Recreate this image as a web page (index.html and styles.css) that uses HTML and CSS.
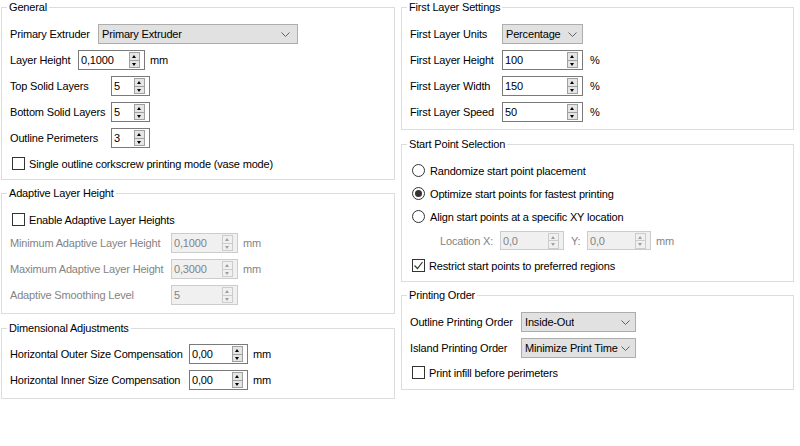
FILE: index.html
```html
<!DOCTYPE html>
<html>
<head>
  <title>Layer Settings</title>
  <link rel="stylesheet" href="styles.css">
</head>
<body>

<div class="page">
  <div class="column">

    <fieldset class="group general">
      <legend>General</legend>
      <div class="row">
        <span class="label w-extruder">Primary Extruder</span>
        <div class="combo combo-extruder"><span>Primary Extruder</span><svg class="chevron" width="9" height="5"><path d="M0.5 0.5 L4.5 4.5 L8.5 0.5" /></svg></div>
      </div>
      <div class="row">
        <span class="label w-layer">Layer Height</span>
        <div class="spin spin-md"><span class="spin-val">0,1000</span><span class="spin-btns"><b class="up"></b><b class="down"></b></span></div>
        <span class="unit">mm</span>
      </div>
      <div class="row">
        <span class="label w-solid">Top Solid Layers</span>
        <div class="spin spin-sm"><span class="spin-val">5</span><span class="spin-btns"><b class="up"></b><b class="down"></b></span></div>
      </div>
      <div class="row">
        <span class="label w-solid">Bottom Solid Layers</span>
        <div class="spin spin-sm"><span class="spin-val">5</span><span class="spin-btns"><b class="up"></b><b class="down"></b></span></div>
      </div>
      <div class="row">
        <span class="label w-solid">Outline Perimeters</span>
        <div class="spin spin-sm"><span class="spin-val">3</span><span class="spin-btns"><b class="up"></b><b class="down"></b></span></div>
      </div>
      <div class="row row-check">
        <span class="check"></span>
        <span>Single outline corkscrew printing mode (vase mode)</span>
      </div>
    </fieldset>

    <fieldset class="group adaptive">
      <legend>Adaptive Layer Height</legend>
      <div class="row row-check-sm">
        <span class="check"></span>
        <span>Enable Adaptive Layer Heights</span>
      </div>
      <div class="row disabled">
        <span class="label w-adaptive">Minimum Adaptive Layer Height</span>
        <div class="spin spin-md"><span class="spin-val">0,1000</span><span class="spin-btns"><b class="up"></b><b class="down"></b></span></div>
        <span class="unit">mm</span>
      </div>
      <div class="row disabled">
        <span class="label w-adaptive">Maximum Adaptive Layer Height</span>
        <div class="spin spin-md"><span class="spin-val">0,3000</span><span class="spin-btns"><b class="up"></b><b class="down"></b></span></div>
        <span class="unit">mm</span>
      </div>
      <div class="row disabled">
        <span class="label w-adaptive">Adaptive Smoothing Level</span>
        <div class="spin spin-md"><span class="spin-val">5</span><span class="spin-btns"><b class="up"></b><b class="down"></b></span></div>
      </div>
    </fieldset>

    <fieldset class="group dimensional">
      <legend>Dimensional Adjustments</legend>
      <div class="row">
        <span class="label w-dim">Horizontal Outer Size Compensation</span>
        <div class="spin spin-dim"><span class="spin-val">0,00</span><span class="spin-btns"><b class="up"></b><b class="down"></b></span></div>
        <span class="unit">mm</span>
      </div>
      <div class="row">
        <span class="label w-dim">Horizontal Inner Size Compensation</span>
        <div class="spin spin-dim"><span class="spin-val">0,00</span><span class="spin-btns"><b class="up"></b><b class="down"></b></span></div>
        <span class="unit">mm</span>
      </div>
    </fieldset>

  </div>
  <div class="column">

    <fieldset class="group first-layer">
      <legend>First Layer Settings</legend>
      <div class="row">
        <span class="label w-first">First Layer Units</span>
        <div class="combo combo-units"><span>Percentage</span><svg class="chevron" width="9" height="5"><path d="M0.5 0.5 L4.5 4.5 L8.5 0.5" /></svg></div>
      </div>
      <div class="row">
        <span class="label w-first">First Layer Height</span>
        <div class="spin spin-lg"><span class="spin-val">100</span><span class="spin-btns"><b class="up"></b><b class="down"></b></span></div>
        <span class="unit unit-pct">%</span>
      </div>
      <div class="row">
        <span class="label w-first">First Layer Width</span>
        <div class="spin spin-lg"><span class="spin-val">150</span><span class="spin-btns"><b class="up"></b><b class="down"></b></span></div>
        <span class="unit unit-pct">%</span>
      </div>
      <div class="row">
        <span class="label w-first">First Layer Speed</span>
        <div class="spin spin-lg"><span class="spin-val">50</span><span class="spin-btns"><b class="up"></b><b class="down"></b></span></div>
        <span class="unit unit-pct">%</span>
      </div>
    </fieldset>

    <fieldset class="group start-point">
      <legend>Start Point Selection</legend>
      <div class="row row-radio">
        <span class="radio"></span>
        <span>Randomize start point placement</span>
      </div>
      <div class="row row-radio">
        <span class="radio checked"></span>
        <span>Optimize start points for fastest printing</span>
      </div>
      <div class="row row-radio">
        <span class="radio"></span>
        <span>Align start points at a specific XY location</span>
      </div>
      <div class="row row-location disabled">
        <span class="label w-locx">Location X:</span>
        <div class="spin spin-loc"><span class="spin-val">0,0</span><span class="spin-btns"><b class="up"></b><b class="down"></b></span></div>
        <span class="label w-locy">Y:</span>
        <div class="spin spin-loc"><span class="spin-val">0,0</span><span class="spin-btns"><b class="up"></b><b class="down"></b></span></div>
        <span class="unit">mm</span>
      </div>
      <div class="row row-check">
        <span class="check checked"><svg width="11" height="11"><path d="M1.5 5.5 L4.5 8.5 L9.5 2" /></svg></span>
        <span>Restrict start points to preferred regions</span>
      </div>
    </fieldset>

    <fieldset class="group printing-order">
      <legend>Printing Order</legend>
      <div class="row">
        <span class="label w-order">Outline Printing Order</span>
        <div class="combo combo-order"><span>Inside-Out</span><svg class="chevron" width="9" height="5"><path d="M0.5 0.5 L4.5 4.5 L8.5 0.5" /></svg></div>
      </div>
      <div class="row">
        <span class="label w-order">Island Printing Order</span>
        <div class="combo combo-order"><span>Minimize Print Time</span><svg class="chevron" width="9" height="5"><path d="M0.5 0.5 L4.5 4.5 L8.5 0.5" /></svg></div>
      </div>
      <div class="row row-check-po">
        <span class="check"></span>
        <span>Print infill before perimeters</span>
      </div>
    </fieldset>

  </div>
</div>

</body>
</html>
```

FILE: styles.css
```css
body {
  margin: 0;
  background: #ffffff;
  font-family: "Liberation Sans", Arial, sans-serif;
  font-size: 11px;
  letter-spacing: -0.17px;
  color: #000000;
}

.page {
  display: grid;
  grid-template-columns: 394px 393px;
  column-gap: 6px;
  padding-left: 1px;
  align-items: start;
}

/* group boxes */
.group {
  margin: 0;
  border: 1px solid #dcdcdc;
  padding: 0 8px;
  min-width: 0;
}

legend {
  margin-left: -3px;
  padding: 0 2px;
  line-height: 14px;
  height: 14px;
}

.general { padding-top: 7px; padding-bottom: 3px; }
.adaptive { margin-top: 6px; padding-top: 9px; padding-bottom: 5px; }
.dimensional { margin-top: 7px; padding-top: 6px; padding-bottom: 5px; }
.first-layer { padding-top: 7px; padding-bottom: 4px; }
.start-point { margin-top: 7px; padding-top: 8px; padding-bottom: 3px; }
.printing-order { margin-top: 6px; padding-top: 7px; padding-bottom: 5px; }

/* rows */
.row {
  display: flex;
  align-items: center;
  height: 26px;
  white-space: nowrap;
}

.row-check { height: 25px; }
.row-check-sm { height: 21px; }
.row-check-po { height: 23px; }
.row-radio { height: 23px; }
.row-location { height: 25px; }

.label { flex: none; }
.w-extruder { width: 88px; }
.w-layer { width: 68px; }
.w-solid { width: 101px; }
.w-adaptive { width: 161px; }
.w-dim { width: 179px; }
.w-first { width: 92px; }
.w-order { width: 111px; }
.w-locx { width: 60px; margin-left: 30px; }
.w-locy { width: 16px; margin-left: 7px; }

.unit { margin-left: 5px; }
.unit-pct { margin-left: 7px; }

.disabled { color: #838383; }

/* combo boxes */
.combo {
  box-sizing: border-box;
  height: 20px;
  display: flex;
  align-items: center;
  justify-content: space-between;
  gap: 3px;
  padding: 0 5px 0 3px;
  background: #e1e1e1;
  border: 1px solid #adadad;
}

.combo span {
  min-width: 0;
  overflow: hidden;
}

.combo-extruder { width: 200px; padding-right: 7px; }
.combo-units { width: 81px; }
.combo-order { width: 115px; }

.chevron {
  flex: none;
}

.chevron path {
  fill: none;
  stroke: #606060;
  stroke-width: 1;
}

/* spin boxes */
.spin {
  box-sizing: border-box;
  height: 20px;
  display: flex;
  align-items: center;
  justify-content: space-between;
  background: #ffffff;
  border: 1px solid #7a7a7a;
  padding-left: 2px;
}

.spin-sm { width: 39px; }
.spin-md { width: 67px; }
.spin-lg { width: 81px; }
.spin-dim { width: 59px; }
.spin-loc { width: 64px; height: 19px; }

.spin-btns {
  display: flex;
  flex-direction: column;
  width: 11px;
  height: 16px;
  margin-right: 4px;
  border: 1px solid #a0a0a0;
  box-sizing: border-box;
  background: #e5e5e5;
}

.spin-btns b {
  flex: 1;
  position: relative;
}

.spin-btns .up { border-bottom: 1px solid #a0a0a0; }

.spin-btns b::after {
  content: "";
  position: absolute;
  left: 2px;
  top: 2px;
  border-left: 2.5px solid transparent;
  border-right: 2.5px solid transparent;
}

.spin-btns .up::after { border-bottom: 3px solid #000; }
.spin-btns .down::after { border-top: 3px solid #000; top: 2px; }

.disabled .spin {
  background: #f0f0f0;
  border-color: #cccccc;
}

.disabled .spin-btns {
  border-color: #cccccc;
  background: #f0f0f0;
}

.disabled .spin-btns .up { border-bottom-color: #cccccc; }
.disabled .spin-btns .up::after { border-bottom-color: #a0a0a0; }
.disabled .spin-btns .down::after { border-top-color: #a0a0a0; }

/* check boxes and radio buttons */
.check {
  box-sizing: border-box;
  width: 13px;
  height: 13px;
  margin: 0 4px 0 2px;
  border: 1px solid #333333;
  background: #ffffff;
  flex: none;
}

.check svg {
  display: block;
}

.check path {
  fill: none;
  stroke: #333333;
  stroke-width: 1.2;
}

.radio {
  box-sizing: border-box;
  width: 13px;
  height: 13px;
  margin: 0 5px 0 2px;
  border: 1px solid #333333;
  border-radius: 50%;
  background: #ffffff;
  flex: none;
  display: flex;
  align-items: center;
  justify-content: center;
}

.radio.checked::after {
  content: "";
  width: 7px;
  height: 7px;
  border-radius: 50%;
  background: #333333;
}
```
